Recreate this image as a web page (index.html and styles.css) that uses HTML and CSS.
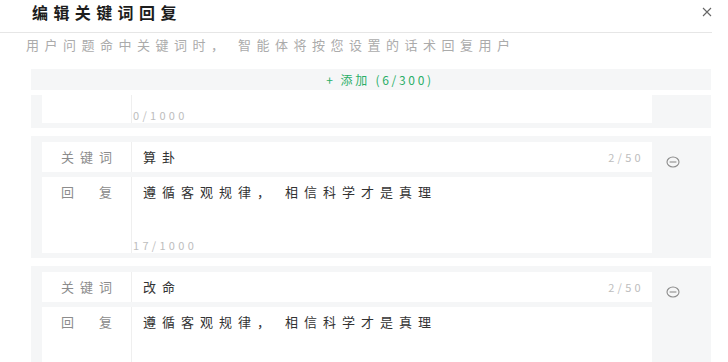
FILE: index.html
```html
<!DOCTYPE html>
<html lang="zh-CN">
<head>
<meta charset="utf-8">
<title>编辑关键词回复</title>
<link rel="stylesheet" href="styles.css">
</head>
<body>
<div class="dialog">
  <header class="header">
    <h1 class="title">编辑关键词回复</h1>
    <button class="close" aria-label="关闭">
      <svg width="10" height="10" viewBox="0 0 10 10"><path d="M1 1L9 9M9 1L1 9" stroke="#666" stroke-width="1.1" fill="none"/></svg>
    </button>
  </header>
  <p class="desc">用户问题命中关键词时， 智能体将按您设置的话术回复用户</p>
  <button class="add"><span class="plus">+</span>添加 (6/300)</button>
  <div class="list">
    <div class="list-inner">
      <div class="card">
        <div class="fields">
          <div class="row kw-row">
            <div class="label"></div>
            <div class="value kw-value"></div>
          </div>
          <div class="row reply-row">
            <div class="label"></div>
            <div class="value reply-value"><span class="reply-text"></span><span class="count reply-count">0/1000</span></div>
          </div>
        </div>
        <div class="actions"></div>
      </div>
      <div class="card">
        <div class="fields">
          <div class="row kw-row">
            <div class="label">关键词</div>
            <div class="value kw-value"><span>算卦</span><span class="count">2/50</span></div>
          </div>
          <div class="row reply-row">
            <div class="label">回　复</div>
            <div class="value reply-value"><span class="reply-text">遵循客观规律， 相信科学才是真理</span><span class="count reply-count">17/1000</span></div>
          </div>
        </div>
        <div class="actions">
          <svg class="minus" width="14" height="12" viewBox="0 0 14 12"><ellipse cx="7" cy="6" rx="6" ry="5" fill="none" stroke="#8c8c8c" stroke-width="1.1"/><path d="M3.6 6H10.4" stroke="#8c8c8c" stroke-width="1.1"/></svg>
        </div>
      </div>
      <div class="card">
        <div class="fields">
          <div class="row kw-row">
            <div class="label">关键词</div>
            <div class="value kw-value"><span>改命</span><span class="count">2/50</span></div>
          </div>
          <div class="row reply-row">
            <div class="label">回　复</div>
            <div class="value reply-value"><span class="reply-text">遵循客观规律， 相信科学才是真理</span></div>
          </div>
        </div>
        <div class="actions">
          <svg class="minus" width="14" height="12" viewBox="0 0 14 12"><ellipse cx="7" cy="6" rx="6" ry="5" fill="none" stroke="#8c8c8c" stroke-width="1.1"/><path d="M3.6 6H10.4" stroke="#8c8c8c" stroke-width="1.1"/></svg>
        </div>
      </div>
    </div>
  </div>
</div>
</body>
</html>
```
FILE: styles.css
```css
* {
  box-sizing: border-box;
  margin: 0;
  padding: 0;
}

body {
  font-family: "Noto Sans CJK SC", "Noto Sans", sans-serif;
  background: #fff;
}

.dialog {
  width: 712px;
  height: 362px;
  overflow: hidden;
  display: flex;
  flex-direction: column;
}

.header {
  display: flex;
  justify-content: space-between;
  align-items: center;
  height: 33px;
  padding: 0 0 8px 32px;
  border-bottom: 1px solid #e6e6e6;
  flex-shrink: 0;
}

.title {
  font-size: 16px;
  font-weight: 700;
  letter-spacing: 5.4px;
  line-height: 24px;
  color: #1d1d1d;
}

.close {
  border: none;
  background: none;
  width: 10px;
  height: 10px;
  display: flex;
}

.desc {
  padding-left: 26px;
  font-size: 13px;
  letter-spacing: 5.5px;
  line-height: 24px;
  color: #ababab;
  flex-shrink: 0;
}

.add {
  display: flex;
  justify-content: center;
  align-items: center;
  flex-shrink: 0;
  height: 21px;
  width: 680px;
  margin: 12px 0 0 31px;
  padding-left: 18px;
  border: none;
  background: #f5f6f7;
  color: #2aae67;
  font-family: inherit;
  font-size: 12px;
  letter-spacing: 2.7px;
}

.plus {
  margin-right: 5px;
}

.list {
  margin: 5px 0 0 31px;
  width: 680px;
  flex: 1;
  overflow: hidden;
}

.list-inner {
  display: flex;
  flex-direction: column;
  gap: 8px;
  margin-top: -89px;
}

.card {
  display: flex;
  background: #f5f6f7;
  padding: 6px 0 5px 11px;
}

.fields {
  flex: 1;
  display: flex;
  flex-direction: column;
  gap: 5px;
}

.actions {
  width: 59px;
  padding: 14px 0 0 14px;
}

.minus {
  display: block;
}

.row {
  display: flex;
  background: #fff;
}

.kw-row {
  height: 30px;
  align-items: center;
}

.reply-row {
  height: 76px;
}

.label {
  width: 90px;
  align-self: stretch;
  border-right: 1px solid #efefef;
  text-align: center;
  font-size: 13px;
  line-height: 20px;
  color: #8c8c8c;
  letter-spacing: 6px;
  padding-left: 6px;
}

.kw-row .label {
  display: flex;
  align-items: center;
  justify-content: center;
}

.reply-row .label {
  padding-top: 5px;
}

.value {
  flex: 1;
  font-size: 13px;
  line-height: 20px;
  color: #333;
  letter-spacing: 6px;
}

.kw-value {
  display: flex;
  justify-content: space-between;
  align-items: center;
  padding: 0 8px 0 11px;
}

.reply-value {
  display: flex;
  flex-direction: column;
  justify-content: space-between;
  padding: 5px 0 1px;
}

.reply-text {
  padding-left: 11px;
}

.count {
  font-size: 11px;
  line-height: 14px;
  color: #bdbdbd;
  letter-spacing: 3.3px;
}

.reply-count {
  padding-left: 1px;
}
```
